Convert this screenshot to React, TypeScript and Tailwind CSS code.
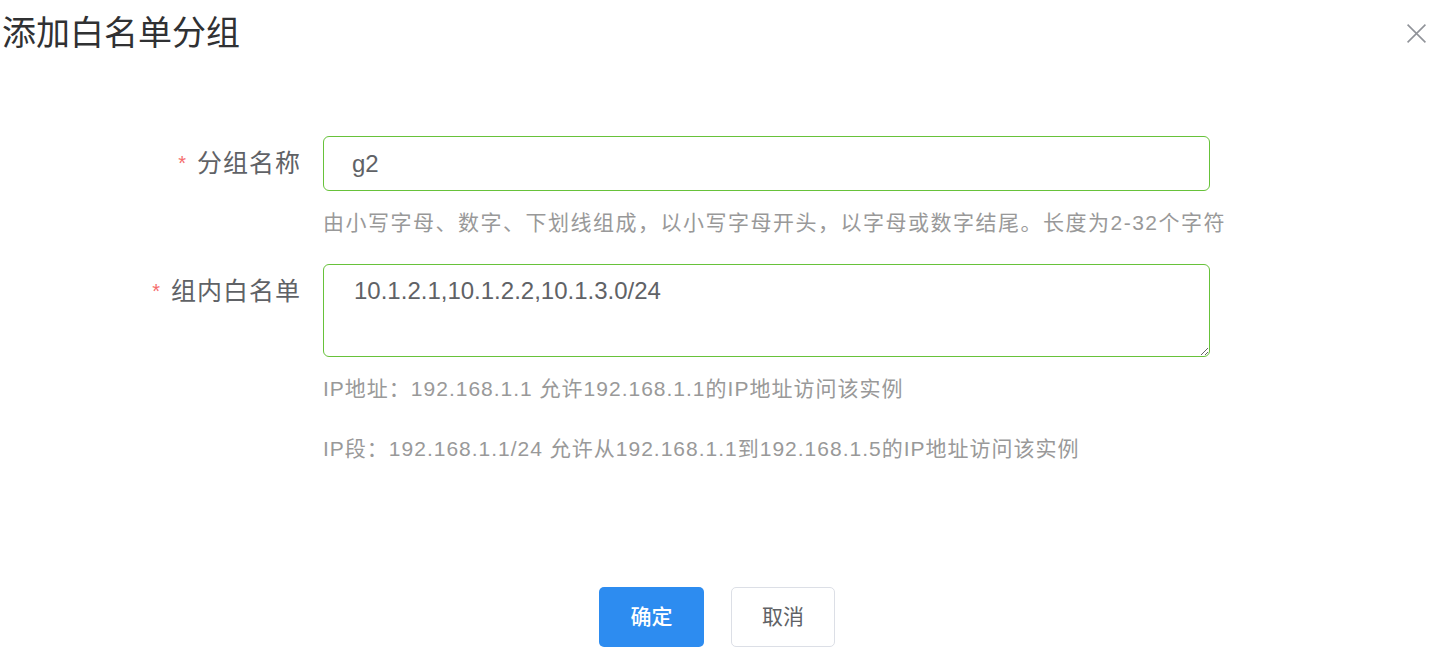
import React from 'react';

const font = '[font-family:"Liberation_Sans","Noto_Sans_CJK_SC",sans-serif]';

export default function App() {
  return (
    <div className={`h-[667px] w-[1443px] overflow-hidden bg-white ${font}`}>
      {/* header */}
      <div className="flex h-[66px] items-center justify-between pl-[2px] pr-[15px]">
        <h1 className="text-[34px] leading-none text-[#303133]">添加白名单分组</h1>
        <button className="flex h-[24px] w-[24px] items-center justify-center text-[#909399]" aria-label="close">
          <svg width="21" height="21" viewBox="0 0 20 20" fill="none" stroke="currentColor" strokeWidth="1.5">
            <path d="M1.5 1.5 L18.5 18.5 M18.5 1.5 L1.5 18.5" />
          </svg>
        </button>
      </div>

      {/* form */}
      <div className="mt-[70px]">
        <div className="flex">
          <label className="w-[301px] text-right text-[25px] leading-[55px] tracking-[1px] text-[#606266]">
            <span className="mr-[10px] align-top text-[20px] text-[#f56c6c]">*</span>
            分组名称
          </label>
          <div className="ml-[22px]">
            <input
              defaultValue="g2"
              className="h-[55px] w-[887px] rounded-[6px] border border-[#67c23a] pl-[28px] text-[24px] text-[#606266] outline-none"
            />
            <div className="mt-[17px] whitespace-nowrap text-[21px] leading-[30px] tracking-[1.5px] text-[#999]">
              由小写字母、数字、下划线组成，以小写字母开头，以字母或数字结尾。长度为2-32个字符
            </div>
          </div>
        </div>

        <div className="mt-[26px] flex">
          <label className="w-[301px] text-right text-[25px] leading-[55px] tracking-[1px] text-[#606266]">
            <span className="mr-[10px] align-top text-[20px] text-[#f56c6c]">*</span>
            组内白名单
          </label>
          <div className="ml-[22px]">
            <textarea
              defaultValue="10.1.2.1,10.1.2.2,10.1.3.0/24"
              className="block h-[93px] w-[887px] resize-y rounded-[6px] border border-[#67c23a] pl-[30px] pt-[8px] text-[24px] leading-[36px] text-[#606266] outline-none"
            />
            <div className="mt-[17px] whitespace-nowrap text-[21px] leading-[30px] tracking-[1px] text-[#999]">
              IP地址：192.168.1.1 允许192.168.1.1的IP地址访问该实例
            </div>
            <div className="mt-[30px] whitespace-nowrap text-[21px] leading-[30px] tracking-[1px] text-[#999]">
              IP段：192.168.1.1/24 允许从192.168.1.1到192.168.1.5的IP地址访问该实例
            </div>
          </div>
        </div>
      </div>

      {/* footer */}
      <div className="mt-[123px] flex gap-[27px] pl-[599px]">
        <button className="h-[60px] w-[105px] rounded-[5px] bg-[#2d8cf0] text-[21px] font-medium text-white">确定</button>
        <button className="h-[60px] w-[104px] rounded-[5px] border border-[#dcdfe6] bg-white text-[21px] text-[#606266]">取消</button>
      </div>
    </div>
  );
}
